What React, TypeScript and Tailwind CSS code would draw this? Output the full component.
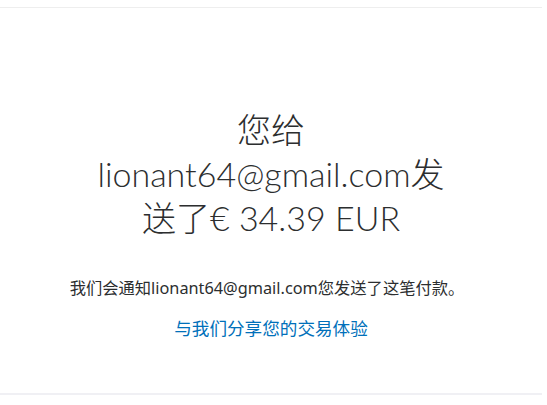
import React from 'react';

export default function App() {
  return (
    <div className="w-[547px] h-[405px] bg-white pt-[7px]" style={{ fontFamily: '"Noto Sans", "Noto Sans CJK SC", sans-serif' }}>
      <div className="w-[542px] h-[388px] border-t border-b-2 border-t-[#eeeeee] border-b-[#f0f0f4] flex flex-col items-center">
        <h1
          className="mt-[100px] w-[370px] text-center text-[34px] leading-[44px] font-light text-[#2c2e2f]"
          style={{ fontFamily: 'Lato, "Noto Sans CJK SC", sans-serif' }}
        >
          您给 lionant64@gmail.com发送了€ 34.39 EUR
        </h1>
        <p className="mt-[36px] -ml-[8px] text-[16.3px] leading-[24px] text-[#2c2e2f]">
          我们会通知lionant64@gmail.com您发送了这笔付款。
        </p>
        <a href="#" className="mt-[16px] text-[17.6px] leading-[24px] text-[#0070ba]">
          与我们分享您的交易体验
        </a>
      </div>
    </div>
  );
}
